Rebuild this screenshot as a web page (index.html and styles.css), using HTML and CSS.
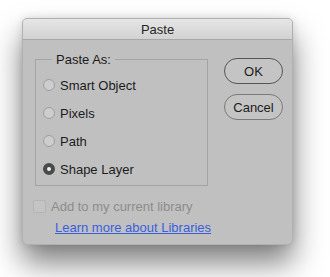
FILE: index.html
```html
<!DOCTYPE html>
<html>
<head>
<meta charset="utf-8">
<link rel="stylesheet" href="styles.css">
</head>
<body>
<div class="dialog">
  <div class="titlebar">Paste</div>
  <div class="content">
    <div class="main">
      <fieldset class="group">
        <legend>Paste As:</legend>
        <label class="radio"><span class="dot"></span>Smart Object</label>
        <label class="radio"><span class="dot"></span>Pixels</label>
        <label class="radio"><span class="dot"></span>Path</label>
        <label class="radio"><span class="dot checked"></span>Shape Layer</label>
      </fieldset>
      <div class="check"><span class="box"></span>Add to my current library</div>
      <a class="link" href="#">Learn more about Libraries</a>
    </div>
    <div class="buttons">
      <button class="btn default">OK</button>
      <button class="btn">Cancel</button>
    </div>
  </div>
</div>
</body>
</html>
```
FILE: styles.css
```css
html, body {
  margin: 0;
  background: #ffffff;
  min-height: 277px;
}
body {
  padding: 18px 0 0 22px;
  box-sizing: border-box;
  font-family: "Liberation Sans", Arial, sans-serif;
  font-size: 13px;
  line-height: 15px;
  color: #1c1c1c;
}
.dialog {
  width: 271px;
  height: 227px;
  box-sizing: border-box;
  background: #c0c0c0;
  border-radius: 5px;
  border: 1px solid #b0b0b0;
  box-shadow: 0 18px 30px rgba(0,0,0,0.5), 0 0 8px rgba(0,0,0,0.12);
  overflow: hidden;
}
.titlebar {
  height: 20px;
  line-height: 22px;
  text-align: center;
  font-size: 13px;
  color: #262626;
  background: linear-gradient(#e6e6e6, #d2d2d2);
  border-bottom: 1px solid #a8a8a8;
}
.content {
  display: flex;
  padding: 0 0 0 12px;
}
.main {
  width: 173px;
}
.group {
  margin: 12px 0 0 0;
  padding: 4px 0 2px 7px;
  border: 1px solid #a4a4a4;
  border-radius: 0;
}
.group legend {
  margin-left: 9px;
  padding: 0 4px;
  color: #1c1c1c;
}
.radio {
  display: flex;
  align-items: center;
  height: 28px;
  gap: 5px;
}
.dot {
  width: 12px;
  height: 12px;
  box-sizing: border-box;
  border-radius: 50%;
  border: 1px solid #9e9e9e;
  background: #cdcdcd;
}
.dot.checked {
  border: 4px solid #4a4a4a;
  background: #f0f0f0;
}
.check {
  display: flex;
  align-items: center;
  gap: 5px;
  margin: 13px 0 0 -2px;
  color: #8c8c8c;
}
.box {
  width: 11px;
  height: 11px;
  border: 1px solid #b4b4b4;
  border-radius: 2px;
  background: #c4c4c4;
}
.link {
  display: block;
  margin: 6px 0 0 20px;
  color: #3a5fdb;
  text-decoration: underline;
  white-space: nowrap;
}
.buttons {
  display: flex;
  flex-direction: column;
  gap: 10px;
  margin: 18px 0 0 16px;
}
.btn {
  width: 59px;
  height: 26px;
  border-radius: 13px;
  border: 1px solid #7a7a7a;
  background: #c4c4c4;
  font-family: inherit;
  font-size: 13px;
  color: #1c1c1c;
  padding: 0;
}
.btn.default {
  border-color: #555555;
}
```
